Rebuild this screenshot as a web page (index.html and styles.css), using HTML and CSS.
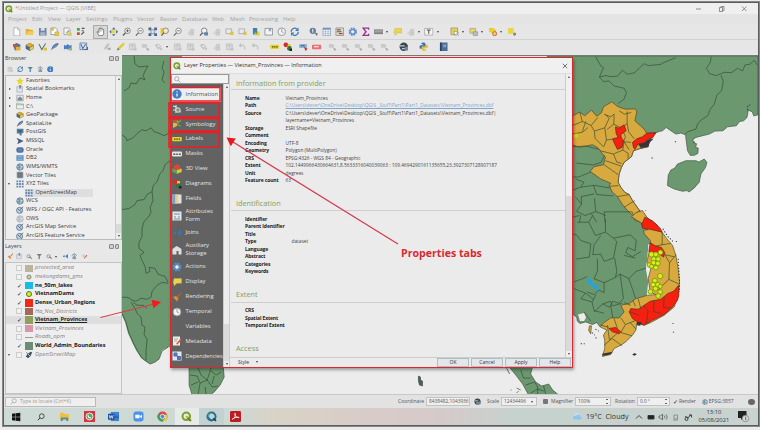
FILE: index.html
```html
<!DOCTYPE html>
<html lang="en">
<head>
<meta charset="utf-8">
<title>Untitled Project — QGIS</title>
<link rel="stylesheet" href="styles.css">
</head>
<body>
<svg class="defs" width="0" height="0">
  <defs>
    <symbol id="qgis" viewBox="0 0 10 10"><circle cx="4.8" cy="4.8" r="3.4" fill="none" stroke="#7aa32c" stroke-width="1.9"/><path d="M5 5l4 4" stroke="#5d8a20" stroke-width="1.9"/><path d="M4.6 4.6l1.6 1.6" stroke="#e2b63c" stroke-width="1.5"/></symbol>
    <symbol id="page" viewBox="0 0 10 10"><path d="M2 .8h4.2L8.200 3v6.300H2z" fill="#fff" stroke="#9a9a9a" stroke-width=".7"/><path d="M6 1v2.200h2" fill="none" stroke="#9a9a9a" stroke-width=".6"/></symbol>
    <symbol id="folder" viewBox="0 0 10 10"><path d="M.7 2h3l1 1h3.500v5.500H.7z" fill="#e6ad35"/><path d="M1 8.500l1.500-4h7L8.200 8.500z" fill="#f5ca55"/></symbol>
    <symbol id="save" viewBox="0 0 10 10"><path d="M1 1h8v8H1z" fill="#7184a4"/><path d="M3 1h4v3H3z" fill="#d6deeb"/><path d="M2.500 5.500h5V9h-5z" fill="#a9b6cc"/></symbol>
    <symbol id="layout" viewBox="0 0 10 10"><path d="M1 1h5l1.500 1.500V8H1z" fill="#fff" stroke="#8b8b8b" stroke-width=".8"/><path d="M1 1h3v3H1z" fill="#e8b83b"/><path d="M5.200 5.200h4v4h-4z" fill="#eec834" stroke="#a8922b" stroke-width=".4"/></symbol>
    <symbol id="tool" viewBox="0 0 10 10"><path d="M1 1h5l1.500 1.500V8H1z" fill="#f4f4f4" stroke="#8b8b8b" stroke-width=".7"/><path d="M3 6l3-3 1.200 1.200-3 3z" fill="#a5aa90"/><path d="M5.500 6h3.700v3.200H5.500z" fill="#ddca52"/></symbol>
    <symbol id="style" viewBox="0 0 10 10"><path d="M1 1h3v3H1z" fill="#48a458"/><path d="M1 5.500h3v3H1z" fill="#d14d3a"/><path d="M6 1.500h3M6 4h2M5.500 8l3-3" stroke="#555" stroke-width="1.200"/></symbol>
    <symbol id="hand" viewBox="0 0 10 10"><path d="M3 9L1 5.200l1-.4L3 6V2.200h1V1h1v.7h1V2h1v.7h1V7L7 9z" fill="#fff" stroke="#555" stroke-width=".7"/><path d="M4 2.500V5M5 2v3M6 2.500V5" stroke="#777" stroke-width=".4"/></symbol>
    <symbol id="pan" viewBox="0 0 10 10"><path d="M5 .3l2 2.200H3zM5 9.700L3 7.500h4zM.3 5l2.200-2v4zM9.700 5L7.500 7V3z" fill="#3979a8"/><path d="M3.300 3.300h3.400v3.400H3.300z" fill="#f1d232"/></symbol>
    <symbol id="zoomin" viewBox="0 0 10 10"><circle cx="5.800" cy="4" r="2.900" fill="#f6f6f6" stroke="#6b6b6b" stroke-width=".8"/><path d="M3.700 6.200L.9 9" stroke="#555" stroke-width="1.300"/><path d="M4.300 4h3M5.800 2.500v3" stroke="#444" stroke-width=".8"/></symbol>
    <symbol id="zoomout" viewBox="0 0 10 10"><circle cx="5.800" cy="4" r="2.900" fill="#f6f6f6" stroke="#777" stroke-width=".8"/><path d="M3.700 6.200L.9 9" stroke="#666" stroke-width="1.200"/><path d="M4.300 4h3" stroke="#555" stroke-width=".8"/></symbol>
    <symbol id="zoomfull" viewBox="0 0 10 10"><path d="M.5.500h3v3h-3zM6.500.500h3v3h-3zM.5 6.500h3v3h-3zM6.500 6.500h3v3h-3z" fill="#47688f"/><circle cx="5" cy="5" r="2.200" fill="#d7e1ed" stroke="#627b98" stroke-width=".8"/></symbol>
    <symbol id="zoomsel" viewBox="0 0 10 10"><path d="M.5 1h5v6h-5z" fill="#eccb38"/><circle cx="6" cy="4" r="2.900" fill="#eee9c4" stroke="#777" stroke-width=".8"/><path d="M4 6.200L1.500 9" stroke="#555" stroke-width="1.200"/></symbol>
    <symbol id="zoomblue" viewBox="0 0 10 10"><circle cx="5.500" cy="4" r="2.900" fill="#eef2f5" stroke="#667" stroke-width=".8"/><path d="M3.700 6.200L1 9" stroke="#555" stroke-width="1.200"/><path d="M5.500 5.500h4v3.500h-4z" fill="#5f87ac"/></symbol>
    <symbol id="ghost" viewBox="0 0 10 10"><path d="M1.500 7.500l3-4M5 2.500h3v3H5zM4 6h4v2.500H4z" fill="#d3d3d3" stroke="#bcbcbc" stroke-width=".7"/></symbol>
    <symbol id="ghost2" viewBox="0 0 10 10"><path d="M1.500 2h6v6h-6zM2 4h6M4.500 2v6" fill="#dedede" stroke="#bdbdbd" stroke-width=".8"/><path d="M6 6h3v3H6z" fill="#c4c4c4"/></symbol>
    <symbol id="ghost3" viewBox="0 0 10 10"><path d="M1.500 3l3 4 3-3M2 3h4" fill="none" stroke="#bbb" stroke-width="1.100"/><path d="M6 6h2.500v2.500H6z" fill="#c6c6c6"/></symbol>
    <symbol id="ghost4" viewBox="0 0 10 10"><path d="M1 2h4l2 2-1.500 2H1z" fill="#c9c9c9"/><path d="M5 5.500l4 2-2 2z" fill="#aaa"/></symbol>
    <symbol id="undo" viewBox="0 0 10 10"><path d="M3 1.500L1.500 4 4 5M2 4c3-2 6 0 5 4" fill="none" stroke="#bdbdbd" stroke-width="1.100"/></symbol>
    <symbol id="mapnew" viewBox="0 0 10 10"><path d="M1 2h6v5H1z" fill="#e9e9e9" stroke="#999" stroke-width=".7"/><path d="M5.500 5h3.500v3.500H5.500z" fill="#dfc241"/></symbol>
    <symbol id="db" viewBox="0 0 10 10"><path d="M2 1h4.500v7H2z" fill="#3b83ac"/><path d="M4 5h5v4H4z" fill="#e8cb3a"/><path d="M4 4.500h3L5.500 8z" fill="#4b9754"/></symbol>
    <symbol id="book" viewBox="0 0 10 10"><path d="M1 1.500h8v7H1z" fill="#f3f3f3" stroke="#88909a" stroke-width=".9"/><path d="M5 1h2.500v4L6.200 4 5 5z" fill="#929eac"/></symbol>
    <symbol id="clock" viewBox="0 0 10 10"><circle cx="5" cy="5" r="4" fill="#f3f3f3" stroke="#8d8d8d" stroke-width=".9"/><path d="M5 2v3l2 1" fill="none" stroke="#888" stroke-width=".8"/></symbol>
    <symbol id="refresh" viewBox="0 0 10 10"><path d="M1.300 5a3.700 3.700 0 0 1 6-3M8.700 5a3.700 3.700 0 0 1-6 3" fill="none" stroke="#3579ba" stroke-width="1.400"/><path d="M9 .5v3.700H5.300zM1 9.500V5.800h3.700z" fill="#3579ba"/></symbol>
    <symbol id="ident" viewBox="0 0 10 10"><circle cx="4" cy="4" r="3.300" fill="#607d9d"/><path d="M4 2v4" stroke="#fff"/><path d="M5.500 5l4 2-1.500 2.500z" fill="#777"/></symbol>
    <symbol id="table" viewBox="0 0 10 10"><path d="M1 1h8v8H1z" fill="#f3f6f9" stroke="#8b9cb2" stroke-width=".7"/><path d="M1 1h8v2H1z" fill="#6e96c8"/><path d="M1 5h8M1 7h8M3.700 1v8M6.400 1v8" stroke="#98a9be" stroke-width=".6"/></symbol>
    <symbol id="abacus" viewBox="0 0 10 10"><path d="M1 1h8v8H1z" fill="#dcdccf" stroke="#888" stroke-width=".8"/><path d="M2 3h4M4 7h4" stroke="#b34336" stroke-width="1.300"/><path d="M2 5h5" stroke="#427346" stroke-width="1.300"/></symbol>
    <symbol id="gear" viewBox="0 0 10 10"><circle cx="5" cy="5" r="3.300" fill="none" stroke="#5e8fc5" stroke-width="2.200" stroke-dasharray="1.800 .8"/><circle cx="5" cy="5" r="2.300" fill="#eef3f9" stroke="#5e8fc5" stroke-width="1.200"/></symbol>
    <symbol id="sigma" viewBox="0 0 10 10"><path d="M8 2.800V1.200H2.300L5.300 5 2.300 8.800H8V7.200" fill="none" stroke="#9b2f91" stroke-width="1.400"/></symbol>
    <symbol id="ruler" viewBox="0 0 10 10"><path d="M.3 3h9.400v4H.3z" fill="#aaa" stroke="#666" stroke-width=".7"/><path d="M2 5v2M4 5v2M6 5v2M8 5v2" stroke="#555" stroke-width=".6"/></symbol>
    <symbol id="bubble" viewBox="0 0 10 10"><path d="M2 1.500h7.500v4.800H5L2 9V6.300H1z" fill="#ecd34f" stroke="#c0ab4b" stroke-width=".4"/></symbol>
    <symbol id="text" viewBox="0 0 10 10"><path d="M.7 1.500h8.600v7H.7z" fill="#f4f4f4" stroke="#999" stroke-width=".7"/><path d="M3 3.200h4M5 3.200v4" stroke="#444" stroke-width="1"/></symbol>
    <symbol id="select" viewBox="0 0 10 10"><path d="M1 1h7v7H1z" fill="#e9d34b" stroke="#8f8962" stroke-width=".7"/><path d="M4 4l5 2-2 1 2 2-1 .7-2-2-1 1.300z" fill="#fff" stroke="#666" stroke-width=".5"/></symbol>
    <symbol id="select2" viewBox="0 0 10 10"><path d="M1 1.500h6v5H1z" fill="#ead65c" stroke="#999" stroke-width=".7"/><path d="M4.500 5h4.500v4H4.500z" fill="#b9bec4" stroke="#777" stroke-width=".5"/></symbol>
    <symbol id="select3" viewBox="0 0 10 10"><path d="M1 1h5l3 3-3 3-5-2z" fill="#e8cf30"/><circle cx="7" cy="7" r="2.200" fill="#e7cf52" stroke="#cb5848" stroke-width=".9"/></symbol>
    <symbol id="select4" viewBox="0 0 10 10"><path d="M1 1h6v6H1z" fill="#ecd63f"/><circle cx="8" cy="7.500" r="1.600" fill="#858585"/></symbol>
    <symbol id="dsm" viewBox="0 0 10 10"><path d="M1 3l4-2 4 2-1 5-5 1z" fill="#3d79aa"/><path d="M1 2h4v3H1z" fill="#d5522f"/><path d="M4 5h5v4H4z" fill="#e6b22f"/></symbol>
    <symbol id="gpkg" viewBox="0 0 10 10"><path d="M5 .8l4.300 2.400v4L5 9.500.7 7.200v-4z" fill="#3f6b8d"/><path d="M5 .8l4.300 2.400L5 5.500.7 3.200z" fill="#e4a828"/><path d="M5 6l4-2v3L5 9z" fill="#e8cf45"/></symbol>
    <symbol id="vec" viewBox="0 0 10 10"><path d="M1 2l3 6 4-6.500" fill="none" stroke="#657468" stroke-width="1.100"/><path d="M6 6h3.500v3H6z" fill="#dac03c"/></symbol>
    <symbol id="feather" viewBox="0 0 10 10"><path d="M1 9C2 4 5 1 9 1 9 4 6 6 2.500 7.500z" fill="#5672a3"/><path d="M1 9L7 3" stroke="#dfe6f0" stroke-width=".5"/></symbol>
    <symbol id="mesh" viewBox="0 0 10 10"><path d="M1 3l2 1 2-2 2 2 2-1v5l-2-1-2 1-2-1-2 1z" fill="#477fc2"/><path d="M6 6h3.500v3H6z" fill="#9cae86"/></symbol>
    <symbol id="virt" viewBox="0 0 10 10"><path d="M1 1h7v7H1z" fill="#dce4ee" stroke="#5778a5" stroke-width=".8"/><path d="M2 2l2 5 3-5M5 8h4V5" fill="none" stroke="#4d6da0" stroke-width="1.100"/></symbol>
    <symbol id="pencil" viewBox="0 0 10 10"><path d="M1 9l1-3L7.500.5l1.800 1.800L3.800 8z" fill="#d7cf35"/><path d="M1 9l1-3 1.800 2z" fill="#7c7951"/></symbol>
    <symbol id="pencilg" viewBox="0 0 10 10"><path d="M1 8l1-3L5.500 1 7 2.500 3.800 7z" fill="#c2c2c2"/><path d="M5 6h3v2.500H5z" fill="#aaa"/></symbol>
    <symbol id="labely" viewBox="0 0 10 10"><rect x=".2" y="3" width="9.600" height="4.300" rx="1" fill="#ead326"/><path d="M2 5.200h1.600M4.300 5.200h1.500M6.600 5.200h1.500" stroke="#554c16" stroke-width="1.300"/></symbol>
    <symbol id="diag" viewBox="0 0 10 10"><circle cx="3" cy="3" r="2.500" fill="#d42e25"/><path d="M5 2h3v4H5z" fill="#e9c82b"/><circle cx="6.800" cy="6.800" r="2.500" fill="#2d763c"/><path d="M7 7h2.500v2.500H7z" fill="#222"/></symbol>
    <symbol id="labelb" viewBox="0 0 10 10"><rect y="2" width="8.500" height="4.200" rx="1" fill="#8ab4d8"/><path d="M5 5l4 2-2 2.500z" fill="#c7302e"/><path d="M2 4h4" stroke="#3b5368"/></symbol>
    <symbol id="labelr" viewBox="0 0 10 10"><rect y="3" width="9.800" height="4.500" rx="1" fill="#ec6d72"/><path d="M2 5h5" stroke="#fff" stroke-width="1.100"/></symbol>
    <symbol id="globe" viewBox="0 0 10 10"><circle cx="5" cy="5" r="4.400" fill="#394650"/><path d="M1 4h5M3 7h5" stroke="#bdcbd4" stroke-width="1.300"/><path d="M6 5h3.500v4H6z" fill="#6e879a"/></symbol>
    <symbol id="python" viewBox="0 0 10 10"><path d="M2 1.500C4 0 7 .5 7 2.500V5H3v2H1C0 5 .5 3.500 2 3.500h3z" fill="#3d75a6"/><path d="M8 8.500C6 10 3 9.500 3 7.500V5h4V3h2c1 2 .5 3.500-1 3.500H5z" fill="#e8c141"/></symbol>
    <symbol id="help" viewBox="0 0 10 10"><path d="M1 .5h8v9H1z" fill="#4b6f97"/><path d="M1 .5h1.700v9H1z" fill="#25405f"/><path d="M4.500 2.500h3v3h-3z" fill="#86a2c0"/></symbol>
    <symbol id="star" viewBox="0 0 10 10"><path d="M5 .3l1.400 3.200 3.500.3-2.700 2.300.9 3.500L5 7.700 1.900 9.600l.9-3.500L.1 3.800l3.500-.3z" fill="#ead829"/></symbol>
    <symbol id="mark" viewBox="0 0 10 10"><path d="M1 2h7v7H1z" fill="#dfe3e8" stroke="#9ca8b4" stroke-width=".8"/><path d="M4 0h2.500v5L5.200 4 4 5z" fill="#7a90aa"/></symbol>
    <symbol id="home" viewBox="0 0 10 10"><path d="M1 1.500h8v7H1z" fill="#e5e7ea" stroke="#8c949c" stroke-width=".8"/><path d="M5 3l3 2.500V8H2V5.500z" fill="#7e8c9c"/></symbol>
    <symbol id="drive" viewBox="0 0 10 10"><path d="M.7 1.500h4l1 1H9.300v6H.7z" fill="#eef1ee" stroke="#8ba092" stroke-width=".8"/><path d="M.7 3.500h8.600" stroke="#8ba092" stroke-width="1"/></symbol>
    <symbol id="pg" viewBox="0 0 10 10"><path d="M1 1h8.300v5L7 7v2.500H5L4 7H1z" fill="#507d9c"/><path d="M3 3h4v2H3z" fill="#365c79"/></symbol>
    <symbol id="ms" viewBox="0 0 10 10"><path d="M.5 1l9 4-8 4 1.500-4z" fill="#415c86"/></symbol>
    <symbol id="ora" viewBox="0 0 10 10"><rect x=".5" y="1.500" width="9" height="7" rx="2.500" fill="#4f6ea5"/><path d="M2.500 4h5M2.500 6h5" stroke="#8aa2ca" stroke-width=".6"/></symbol>
    <symbol id="db2" viewBox="0 0 10 10"><path d="M.5 1.500h9v7h-9z" fill="#5e93c4"/><path d="M2 3.500h6M2 6.500h6" stroke="#a9cbe6" stroke-width="1"/></symbol>
    <symbol id="wms" viewBox="0 0 10 10"><circle cx="5" cy="5" r="4" fill="#cfdbe2" stroke="#50748d" stroke-width="1"/><path d="M2 3l3 1 3-2M1 6h5l3 1M4 1v8" fill="none" stroke="#50748d" stroke-width=".9"/></symbol>
    <symbol id="vt" viewBox="0 0 10 10"><path d="M1 1h8v8H1z" fill="#9298a0"/><path d="M3.700 1v8M6.300 1v8M1 3.700h8M1 6.300h8" stroke="#555c65" stroke-width=".8"/></symbol>
    <symbol id="xyz" viewBox="0 0 10 10"><path d="M.5.500h2.300v2.300H.5zM3.800.500h2.300v2.300H3.800zM7.200.500h2.300v2.300H7.200zM.5 3.800h2.300v2.300H.5zM3.800 3.800h2.300v2.300H3.800zM7.200 3.800h2.300v2.300H7.200zM.5 7.200h2.300v2.300H.5zM3.800 7.200h2.300v2.300H3.800zM7.200 7.200h2.300v2.300H7.200z" fill="#6388b4"/></symbol>
    <symbol id="arc" viewBox="0 0 10 10"><circle cx="4.500" cy="5.500" r="3.800" fill="#c3d0dc" stroke="#4f6e91" stroke-width="1"/><path d="M5 4.500l4-3.500M2.500 4l4.500 3.500" stroke="#476789" stroke-width="1.100"/></symbol>
    <symbol id="info" viewBox="0 0 10 10"><circle cx="5" cy="5" r="4.700" fill="#3f7fc1"/><path d="M5 4.500v3M5 2.300v1" stroke="#fff" stroke-width="1.200"/></symbol>
    <symbol id="filter" viewBox="0 0 10 10"><path d="M1 1.500h8L6 5v4.500H4V5z" fill="#4b87b5"/></symbol>
    <symbol id="up" viewBox="0 0 10 10"><path d="M1 4l4-3 4 3M5 2v7M3 6h4v3H3z" fill="none" stroke="#6d7f93" stroke-width="1.200"/></symbol>
    <symbol id="source" viewBox="0 0 10 10"><path d="M1 2l3 1 1 4 4 1M1 6h6M4 1v8" fill="none" stroke="#ddd" stroke-width="1.200"/><circle cx="6" cy="6" r="2.300" fill="#8a9487" stroke="#f0f0e2" stroke-width=".8"/></symbol>
    <symbol id="symb" viewBox="0 0 10 10"><path d="M1 1l6 1-2 5-4 2z" fill="#e4b640"/><path d="M1 1h4v3H1z" fill="#d44f33"/><path d="M5 5l4-4M5 6l4 1" stroke="#5c9c52" stroke-width="1.800"/></symbol>
    <symbol id="mask" viewBox="0 0 10 10"><rect y="2.500" width="10" height="5" rx="1.300" fill="#e4e6e8"/><path d="M1.300 5.200h2M4.200 5.200h1.600M6.800 5.200h2" stroke="#555" stroke-width="1.400"/></symbol>
    <symbol id="cube" viewBox="0 0 10 10"><path d="M5 .3l3 1.500v3L5 6 2 4.800v-3z" fill="#e0443f"/><path d="M.3 4.500L5 6v3.700L.3 8z" fill="#57a84d"/><path d="M9.700 4.500L5 6v3.700L9.700 8z" fill="#e4c42d"/></symbol>
    <symbol id="fields" viewBox="0 0 10 10"><path d="M.5.500h9v9h-9z" fill="#dfe2dc"/><path d="M.5.500h3v9h-3z" fill="#7c9fcb"/><path d="M3.500.500H6v9H3.500z" fill="#e4d37d"/></symbol>
    <symbol id="form" viewBox="0 0 10 10"><path d="M.5.500h9v9h-9z" fill="#e4e8ea"/><path d="M2 3h6M2 6h2M6 6h2M2 8h6" stroke="#798d9c" stroke-width="1"/></symbol>
    <symbol id="join" viewBox="0 0 10 10"><path d="M1 5l3-2v4zM5 5l4-3.500v7z" fill="#3974b7"/></symbol>
    <symbol id="aux" viewBox="0 0 10 10"><path d="M.5 4l4-3 2 1 3 2v5.500h-3V6h-2v3.500h-4z" fill="#dfdfdf"/></symbol>
    <symbol id="brush" viewBox="0 0 10 10"><path d="M5 4.500L9 .5l.6.700L6 5.500z" fill="#c55e2b"/><path d="M1 5l3-1 2.500 2.500L5 9.500z" fill="#e38b38"/></symbol>
    <symbol id="note" viewBox="0 0 10 10"><path d="M1 .5h7v9H1z" fill="#eeece8"/><path d="M2 3h4M2 5h3" stroke="#999" stroke-width=".8"/><path d="M4 8l4.500-5.500L9.700 3.700 5.500 8.500z" fill="#d75b37"/></symbol>
    <symbol id="dep" viewBox="0 0 10 10"><path d="M.5.500h9v9h-9z" fill="#e2e7ee"/><path d="M2 2h3v3H2zM5.500 5.500h3v3h-3zM4 4l3 3" fill="#5a81bb" stroke="#456ca8" stroke-width="1"/></symbol>
    <symbol id="mag" viewBox="0 0 10 10"><circle cx="6" cy="4" r="3" fill="none" stroke="currentColor" stroke-width=".9"/><path d="M3.800 6.200L1 9" stroke="currentColor" stroke-width="1.100"/></symbol>
    <symbol id="eye" viewBox="0 0 10 10"><circle cx="4" cy="5" r="2.500" fill="none" stroke="#888" stroke-width="1.200"/><path d="M5 6l4 2.500" stroke="#666" stroke-width="1.500"/></symbol>
    <symbol id="dot3" viewBox="0 0 10 10"><circle cx="5" cy="5" r="2.600" fill="#c3c9a6" stroke="#777" stroke-width="1"/></symbol>
    <symbol id="osm" viewBox="0 0 10 10"><path d="M1 1l3 2 3-2 2 1-2 4-3 3-3-2 2-3z" fill="#41505c"/><path d="M3 3l4 4" stroke="#b5c6d2" stroke-width="1.200"/></symbol>
  </defs>
</svg>

<div class="window">
  <header class="titlebar">
    <svg class="i8"><use href="#qgis"/></svg><span class="apptitle">*Untitled Project — QGIS [VIBE]</span>
    <span class="winbtns"><svg width="54" height="8" viewBox="0 0 54 8" fill="none" stroke="#777" stroke-width=".8"><path d="M1 4h5"/><path d="M24.500 2.500h3v4h-3zM26 2.500v-1h3v4h-1.500"/><path d="M47 1.500l4.500 4.500M51.500 1.500L47 6"/></svg></span>
  </header>
  <nav class="menubar"><span>Project</span><span>Edit</span><span>View</span><span>Layer</span><span>Settings</span><span>Plugins</span><span>Vector</span><span>Raster</span><span>Database</span><span>Web</span><span>Mesh</span><span>Processing</span><span>Help</span></nav>
  <div class="toolbar">
    <i><svg><use href="#page"/></svg></i><i><svg><use href="#folder"/></svg></i><i><svg><use href="#save"/></svg></i><i><svg><use href="#layout"/></svg></i><i><svg><use href="#tool"/></svg></i><i><svg><use href="#style"/></svg></i>
    <i class="g7 pressed"><svg><use href="#hand"/></svg></i><i><svg><use href="#pan"/></svg></i><i><svg><use href="#zoomin"/></svg></i><i><svg><use href="#zoomout"/></svg></i><i><svg><use href="#zoomfull"/></svg></i><i><svg><use href="#zoomsel"/></svg></i><i><svg><use href="#zoomout"/></svg></i><i><svg><use href="#ghost"/></svg></i><i><svg><use href="#zoomblue"/></svg></i><i><svg><use href="#ghost"/></svg></i><i><svg><use href="#mapnew"/></svg></i><i><svg><use href="#mapnew"/></svg></i><i><svg><use href="#db"/></svg></i><i><svg><use href="#book"/></svg></i><i><svg><use href="#clock"/></svg></i><i><svg><use href="#refresh"/></svg></i>
    <i class="g7"><svg><use href="#ident"/></svg></i><i><svg><use href="#table"/></svg></i><i><svg><use href="#abacus"/></svg></i><i><svg><use href="#gear"/></svg></i><i><svg><use href="#sigma"/></svg></i><i><svg><use href="#ruler"/></svg></i><b></b><i><svg><use href="#bubble"/></svg></i><i><svg><use href="#ghost"/></svg></i><b></b><i><svg><use href="#text"/></svg></i><b></b>
    <i class="g7"><svg><use href="#select"/></svg></i><b></b><i><svg><use href="#select2"/></svg></i><b></b><i><svg><use href="#select3"/></svg></i><b></b><i><svg><use href="#select4"/></svg></i>
  </div>
  <div class="toolbar second">
    <i><svg><use href="#dsm"/></svg></i><i><svg><use href="#gpkg"/></svg></i><i><svg><use href="#vec"/></svg></i><i><svg><use href="#feather"/></svg></i><i><svg><use href="#mesh"/></svg></i>
    <i class="g3"><svg><use href="#virt"/></svg></i>
    <i class="g10"><svg><use href="#pencilg"/></svg></i><i><svg><use href="#pencil"/></svg></i><i><svg><use href="#ghost2"/></svg></i><i><svg><use href="#ghost4"/></svg></i><i><svg><use href="#ghost3"/></svg></i><b></b><i><svg><use href="#ghost2"/></svg></i><i><svg><use href="#ghost2"/></svg></i><i><svg><use href="#ghost3"/></svg></i><i><svg><use href="#ghost"/></svg></i><i><svg><use href="#ghost2"/></svg></i><i><svg><use href="#undo"/></svg></i><i><svg><use href="#undo"/></svg></i>
    <i class="g7"><svg><use href="#labely"/></svg></i><i><svg><use href="#diag"/></svg></i><i class="g3"><svg><use href="#labelb"/></svg></i><i><svg><use href="#labelr"/></svg></i>
    <i class="g3"><svg><use href="#ghost4"/></svg></i><i><svg><use href="#ghost4"/></svg></i><i><svg><use href="#ghost4"/></svg></i><i><svg><use href="#ghost4"/></svg></i><i><svg><use href="#ghost4"/></svg></i>
    <i class="g7"><svg><use href="#globe"/></svg></i><i class="g7"><svg><use href="#python"/></svg></i><i class="g7"><svg><use href="#help"/></svg></i>
  </div>

  <main class="work">
    <aside class="docks">
      <div class="dockhead"><span>Browser</span><em></em><em></em></div>
      <div class="docktools"><i><svg><use href="#ghost2"/></svg></i><i><svg><use href="#refresh"/></svg></i><i><svg><use href="#filter"/></svg></i><i><svg><use href="#up"/></svg></i><i><svg><use href="#info"/></svg></i></div>
      <div class="browser">
        <ul class="tree">
          <li><u></u><svg><use href="#star"/></svg>Favorites</li>
          <li><u class="c"></u><svg><use href="#mark"/></svg>Spatial Bookmarks</li>
          <li><u class="c"></u><svg><use href="#home"/></svg>Home</li>
          <li><u class="c"></u><svg><use href="#drive"/></svg>C:\</li>
          <li><u></u><svg><use href="#gpkg"/></svg>GeoPackage</li>
          <li><u></u><svg><use href="#feather"/></svg>SpatiaLite</li>
          <li><u></u><svg><use href="#pg"/></svg>PostGIS</li>
          <li><u></u><svg><use href="#ms"/></svg>MSSQL</li>
          <li><u></u><svg><use href="#ora"/></svg>Oracle</li>
          <li><u></u><svg><use href="#db2"/></svg>DB2</li>
          <li><u></u><svg><use href="#wms"/></svg>WMS/WMTS</li>
          <li><u></u><svg><use href="#vt"/></svg>Vector Tiles</li>
          <li><u class="o"></u><svg><use href="#xyz"/></svg>XYZ Tiles</li>
          <li class="child"><span><svg><use href="#xyz"/></svg>OpenStreetMap</span></li>
          <li><u></u><svg><use href="#wms"/></svg>WCS</li>
          <li><u></u><svg><use href="#arc"/></svg>WFS / OGC API - Features</li>
          <li><u></u><svg class="pale"><use href="#wms"/></svg>OWS</li>
          <li><u></u><svg><use href="#arc"/></svg>ArcGIS Map Service</li>
          <li><u></u><svg><use href="#arc"/></svg>ArcGIS Feature Service</li>
        </ul>
        <div class="scroll"><s class="up"></s><span class="low"></span><s class="dn"></s></div>
      </div>
      <div class="dockhead lay"><span>Layers</span><em></em><em></em></div>
      <div class="docktools ltools"><i><svg><use href="#brush"/></svg></i><i><svg><use href="#mark"/></svg></i><i><svg><use href="#eye"/></svg></i><i><svg class="grey"><use href="#filter"/></svg></i><i><svg><use href="#eye"/></svg></i><b></b><i><svg><use href="#join"/></svg></i><i><svg><use href="#up"/></svg></i><i><svg><use href="#note"/></svg></i></div>
      <ul class="layers">
        <li class="off"><u></u><q></q><i class="sw tan"></i>protected_area</li>
        <li class="off"><u></u><q></q><i class="sw"><svg><use href="#dot3"/></svg></i>mekongdams_gms</li>
        <li><u></u><q class="k">✓</q><i class="sw cyan"></i>ne_50m_lakes</li>
        <li><u></u><q class="k">✓</q><i class="sw dam"></i>VietnamDams</li>
        <li><u></u><q class="k">✓</q><i class="sw red"></i>Dense_Urban_Regions</li>
        <li class="off"><u></u><q></q><i class="sw brown"></i>Ha_Noi_Districts</li>
        <li class="sel"><u></u><q class="k">✓</q><i class="sw olive"></i><ins>Vietnam_Provinces</ins></li>
        <li class="off"><u></u><q></q><i class="sw pink"></i>Vietnam_Provinces</li>
        <li class="off"><u></u><q></q><i class="sw line"></i>Roads_opm</li>
        <li><u></u><q class="k">✓</q><i class="sw green"></i>World_Admin_Boundaries</li>
        <li class="off"><u class="o"></u><q></q><i class="sw"><svg><use href="#osm"/></svg></i>OpenStreetMap</li>
      </ul>
    </aside>

    <svg class="map" viewBox="122 55 635 340" preserveAspectRatio="none">
      <path class="land nb" d="M122 55h60v292l-14 0-6 3-3 9-4 3-5 2-5-3-4-3-5-8-3-6-5-11-3-11-4-9z"/>
      <path class="bd" d="M122 313l4 9 3 11 5 11 3 6 5 8 4 3 4 3 5-2 4-3 3-8 6-4"/>
      <path class="bd" d="M134 55l1 8 4 3 9-1-3 5-2 5 2 4-5-2-4 6-5-1-2 5-5 3M164 60l-2 7 2 4-2 8 3 3M122 134l4 3 1 3 6-3 5-5 4-3 4 1 5-3 3 4 4 1 6 3 6-3M170 160l-5 4-2 6-3 3-3 8-4 4-1 6-5 3-3 5-7 1-2 4-6 4-7 1M152 191l1 9-3 7 1 5-3 5-4 4-2 7 0 8-3 6 0 6 5 4-4 3 2 5 3 6 1 7 4-2-1-4 6 1 3 6 7 2 3 6M168 283l-6-1-5 3-5 6-1 6-4 2-6-1-5 3-4-1-4-3-6 0M131 302l4 6 2 5 4 4 1 8 3 2-1 7 3 5-1 12 0 9M133 302l4 3 6 0 4 3"/>
      <path class="land nb" d="M560 55h14v65h-14z"/>
      <path class="land" d="M189 366h34l1 11-4 8-6 7-4 3h-18l-3-10z"/>
      <path class="bd" d="M190 375l7 1 3 7 7-3 4-12M200 383l-2 11M207 380l5 7 6-1M211 371l5 4 5-3M191 385l7-3M205 387l1 8M198 368l3 7 6 5M214 376l-2 8"/>
      <path class="land dkl" d="M418 376l2 1 0 3 2 1 0 5-3-1-1-4z"/>
      <path class="land" d="M508 366H532L530 374 535 382 541 386 548 384 552 390 558 395H528L522 384 516 376z"/>
      <path class="bd" d="M520 370l3 8 7 0M525 385l9-3M534 382l3 5 0 7M530 393l7-4 6 2M543 386l2 8M516 388l4 2M518 391l-2 2M510 390h1M506 368l3 6"/>
      <g transform="translate(560 50) scale(.33333)">
        <path class="land" d="M-40 15H591V192L584 194 578 195 574 183 562 178 558 200 548 210 536 212 526 225 500 228 486 240 462 241 445 250 425 255 405 260 396 266 398 276 407 279 404 290 412 292 411 308 400 314 388 314 380 300 376 270 374 252 360 247 345 250 330 240 316 230 305 240 296 242 285 246 262 270 262 288 236 294 218 300 212 318 190 335 182 350 175 370 172 395 180 410 192 425 205 432 215 450 235 478 255 500 270 510 290 525V580H-40z"/>
        <path class="land" d="M322 374L330 358 342 352 350 340 375 330 405 330 414 334 430 325 438 335 434 350 420 370 415 395 400 412 385 424 378 420 365 422 340 415 320 405z"/>
        <path class="bd" d="M105 17L120 45 128 50 116 78 135 74 150 77 170 76 185 58 200 70 220 66 235 52 250 38 262 44 280 42 300 40 310 34 330 26 345 20M116 78L128 92 145 90 160 105 190 112 197 125 190 145 172 158M451 17L448 35 436 52 446 68 466 74 490 64 512 65 530 52 545 60 552 42 566 40 580 28 588 42M480 73L487 90 482 120 468 132 460 160 448 175 440 195 420 208 410 220 405 235 380 243 372 252"/>
        <path class="vn" d="M36 195L57 184 72 195 92 178 108 196 122 186 128 168 153 153 168 165 178 170 195 175 224 174 228 183 222 210 250 235 258 248 285 246 262 270 262 288 236 294 218 300 212 318 190 335 182 350 175 370 172 395 180 410 192 425 205 432 215 450 235 478 255 500 270 510 290 525L250 528 240 515 222 510 216 495 200 480 185 462 170 438 155 425 145 405 150 398 120 385 88 362 100 348 128 342 134 320 118 300 110 290 95 282 75 286 55 290 36 282z"/>
        <path class="bd" d="M57 184l8 28-29 12M65 212l26 12 20-24M91 224l10 17 31-10 13-28-11-12M36 250l30-6 16-14M101 241l2 22 25 25M132 231l5 37-8 20M160 190l-1 30 23 12 17-14 0-36M199 218l5 26 16 20M159 220l-20 16M137 268l20-3M182 232l12 25-9 25M118 300l40 10 28-12 4-25 20 2M158 310l10 24 14 4M186 298l16 10 0 16M190 273l15 24M134 330l46 16M130 342l42 30M145 407l28-2M170 438l36-6M190 470l32-20M216 495l22-16M175 180l16 10 20-5M130 190l20 8 10-8M75 212l-10 30"/>
        <path class="urb" d="M164 228L174 232 190 222 196 240 180 252 182 262 188 268 184 290 170 296 158 272 156 264 172 260 166 248zM215 275L218 290 222 296 232 280 250 276 262 264 275 262 285 246 258 247 245 258 228 264zM240 515L255 505 272 512 290 528H246z"/>
        <path class="dark" d="M232 280L240 292 262 288 268 274 278 264 262 266 250 276z"/>
        <path class="bd" d="M36 288l37-2 43 10M131 315l-10 20-24 8-50-6M90 364l-36 15-18 0M45 385l25 10-10 14-24 10M60 410l40-6 47 8M98 404l10 28 50 4M100 430l-38 8 0 24-15 20 26 13 32-12-4-40M130 484l84 0 4 10M130 484l4 41M105 483l30 12M45 440l17 20M60 494l-5 31M92 490l22 35M36 500l20-5"/>
        <path class="dash" d="M342 273h4M272 322h5M398 275l8-3M560 178l0-14 8-2M254 480h2"/>
        <circle cx="46" cy="255" r="7" fill="#c8d81c"/>
      </g>
      <g transform="translate(560 215) scale(.33333)">
        <path class="land nb" d="M-40 20H230L262 60 262 100 255 160 262 200 258 240 235 255 200 270 196 300 175 310 150 310 130 325 118 335 108 322 95 328 75 320 58 325 50 318 48 305 40 300H-40z"/>
        <path class="bd" d="M40 300L48 305 50 318 58 325 75 320 95 328 108 322 118 335"/>
        <path class="bd" d="M50 20l34 0 20 40 30-10 0-40M84 20l12-20M134 50l24 18 50-10 18 16-3 32-22-10-6 16 20 12 25-16M158 68l10 10-10 50-28 10-10-22-24 2 4-30 20-28M60 75l-12-16-12-4M60 75l30 10-4 40-40 6M110 130l0 38-10 22 30 12 34-16 4-18-6-40M164 186l14-10 26 14 22-22 30-10M204 190l14 40 6 20M130 202l0 30-16-8-14 14-20-8M178 176l10 74-14 14-18-6-10 18-20-10M40 200l40-16M40 220l36 14 24 20M60 250l14-16M60 250l34 10 6 26 30 8M94 260l12-22M126 266l24-8 4 14 30-8M126 266l-26 24M70 290l20 28M190 120l34 8M150 272l6 36"/>
        <path class="lake" d="M78 186l12 6 8 14 12 4 6 14-10-1-12-12-12-8z"/>
        <path class="vn" d="M212 4L225 -8 245 -15 262 10 300 45 318 70 335 90 345 120 352 160 356 200 352 240 340 275 310 300 270 322 250 330 228 325 225 345 215 360 195 380 180 390 160 400 150 418 125 424 132 400 132 375 128 360 138 345 118 335 130 322 150 308 175 308 190 290 180 270 205 265 225 250 260 240 285 238 268 230 262 190 270 160 258 140 265 110 272 90 268 75 250 55 248 45 262 42 245 25 238 20z"/>
        <path class="urb" d="M252 5L275 16 298 38 304 50 270 42 245 38 243 26zM268 82L285 92 302 96 312 112 308 125 290 112 264 108zM353 210L354 240 350 255 335 275 310 298 275 315 250 330 230 320 215 310 205 290 210 280 232 282 250 270 268 258 300 252 320 235 338 228zM144 340L165 337 180 350 175 356 155 350z"/>
        <path class="bd" d="M304 50l0 38-20 4M330 84l-28 4M312 118l28 6M312 118l14 24-2 50 30 14M324 192l-30 30 10 12M326 142l20-24M248 270l14 18-6 36M280 255l-2 34 24 6M310 245l-2 32 24 2M232 250l8 30M208 290l26 10M216 255l8 18M190 262l20 8M180 308l14 20 30-12M160 310l10 30M194 328l-14 24 34 10M140 330l6 44 24-20M130 390l24-20 30 22M120 330l24 6M226 342l-18-20"/>
        <path class="dark" d="M228 320l14 0-4 12-10-2zM214 418l8-4 6 4-8 4zM124 416l32-6-8 8-22 4z"/>
        <path class="sea" d="M52 298l18-5 6 14-6 10-12 0z"/>
        <path class="vn" d="M86 332l6 0-2 24-6-10z"/>
        <path class="dash" d="M306 40l14 22 16 16M352 130l4 70 0 30M60 386h12M335 325h3M336 350l5 2M106 366v4M345 78h3M94 352l8 8M104 342l10 6"/>
        <g class="dams"><circle cx="272" cy="117" r="8"/><circle cx="285" cy="117" r="7"/><circle cx="299" cy="111" r="7"/><circle cx="279" cy="131" r="7"/><circle cx="292" cy="131" r="7"/><circle cx="266" cy="149" r="7"/><circle cx="278" cy="142" r="7"/><circle cx="291" cy="144" r="7"/><circle cx="272" cy="153" r="6"/><circle cx="285" cy="157" r="7"/><circle cx="298" cy="182" r="8"/><circle cx="282" cy="196" r="7"/><circle cx="277" cy="208" r="7"/><circle cx="291" cy="208" r="7"/><circle cx="298" cy="213" r="6"/><circle cx="284" cy="220" r="7"/><circle cx="269" cy="229" r="7"/><circle cx="298" cy="230" r="7"/><circle cx="292" cy="242" r="7"/></g>
      </g>
    </svg>
  </main>

  <footer class="status">
    <div class="locator"><svg><use href="#mag"/></svg>Type to locate (Ctrl+K)</div>
    <label>Coordinate</label><span class="fld co">8438482,1043936</span><svg class="i8 crs"><use href="#globe"/></svg>
    <label>Scale</label><span class="fld sc">12434496<b></b></span><span class="lock"></span>
    <label>Magnifier</label><span class="fld mg">100%<span class="spin"></span></span>
    <label>Rotation</label><span class="fld ro">0.0 °<span class="spin"></span></span>
    <q class="k">✓</q><label>Render</label><svg class="i8 epsg"><use href="#wms"/></svg><label>EPSG:3857</label><span class="msg"></span>
  </footer>
  <footer class="taskbar">
    <i><svg viewBox="0 0 10 10"><path d="M1 1.800l3.600-.5v3.400H1zM5 1.200L9.300.7v4H5zM1 5.200h3.600v3.500L1 8.200zM5 5.200h4.300v4L5 8.700z" fill="#111"/></svg></i>
    <i><svg class="dk"><use href="#mag"/></svg></i>
    <i><svg viewBox="0 0 12 12" class="big"><path d="M1 2h4l1 1.200h5V10H1z" fill="#f1bf42"/><path d="M2 7h8v4H8V9H4v2H2z" fill="#3e8fd2"/></svg></i>
    <i><svg viewBox="0 0 12 12" class="big"><path d="M0 0h12v12H0z" fill="#d6353e"/><circle cx="6" cy="6" r="3.800" fill="#56a96a" stroke="#f2f2f2" stroke-width="1"/><path d="M4.500 4.500c0 2 1.500 3 3 3" fill="none" stroke="#fff" stroke-width="1.200"/></svg></i>
    <i><svg viewBox="0 0 12 12" class="big"><path d="M3 1h9v10H3z" fill="#3c84d4"/><path d="M3 5h9v3H3z" fill="#2768b8"/><path d="M0 3h7v6.500H0z" fill="#1d4f9e"/><path d="M1.300 4.500l1 3.500 1.200-3 1.200 3 1-3.500" fill="none" stroke="#fff" stroke-width=".8"/></svg></i>
    <i><svg viewBox="0 0 12 12" class="big"><rect x=".5" y=".5" width="11" height="11" rx="3" fill="#4b94ea"/><path d="M2.500 4h4.700v4H2.500zM7.700 5.500L9.700 4v4l-2-1.500z" fill="#fff"/></svg></i>
    <i><svg viewBox="0 0 12 12" class="big"><circle cx="6" cy="6" r="5.500" fill="#e4463a"/><path d="M6 6L1.200 3.300A5.500 5.500 0 0 0 6 11.500l2.500-4z" fill="#3ba257"/><path d="M6 11.500A5.500 5.500 0 0 0 11 4H6l2.500 3.500z" fill="#f4ca37"/><circle cx="6" cy="6" r="2.400" fill="#4a86e0" stroke="#fff" stroke-width=".8"/></svg></i>
    <i class="act"><svg class="big"><use href="#qgis"/></svg></i>
    <i class="run"><svg viewBox="0 0 12 12" class="big"><circle cx="6" cy="6" r="5.500" fill="#2d6d8c"/><path d="M2 4l3-2 3 1-1 2-3 2-2-1z" fill="#68a78d"/><circle cx="6.500" cy="6" r="2.500" fill="#a9d8e5" stroke="#eef" stroke-width=".7"/><path d="M8 8l3 3" stroke="#234" stroke-width="1.500"/></svg></i>
    <i><svg viewBox="0 0 12 12" class="big"><rect width="12" height="12" rx="1.500" fill="#bd1d20"/><path d="M2.500 9c3-1 4-4.500 3-6.500-1 2 2 5.500 4.500 4.500-2-.8-5 0-7.500 2z" fill="none" stroke="#fff" stroke-width=".9"/></svg></i>
    <span class="weather"><svg width="10" height="9" viewBox="0 0 10 9"><circle cx="4" cy="3.500" r="2.500" fill="#cfdff2"/><path d="M2 7.500a2 2 0 1 1 1-3.700 2.300 2.300 0 0 1 4.300.6A1.600 1.600 0 0 1 7.500 7.500z" fill="#8cc5ee"/></svg>19°C&nbsp; Cloudy</span>
    <svg class="tray" width="60" height="10" viewBox="0 0 60 10" fill="none" stroke="#333" stroke-width=".9"><path d="M1 6.500l3-3 3 3"/><path d="M13 3.500h6v3.500h-6z" fill="#222"/><path d="M24 4h1.500l2-2v6l-2-2H24zM29 3.500c1 1 1 2 0 3M31 2.500c1.500 2 1.500 3 0 5" stroke="#666"/><path d="M39 3h3.500v4H39zM38 8h5" stroke="#888"/><circle cx="51.500" cy="7" r="1.500"/><path d="M53 6l3-3.500M54 3h2.500v2.500M50 4.500l3 1"/></svg>
    <time><span>13:10</span><span>05/08/2021</span></time>
    <svg class="notif" width="14" height="13" viewBox="0 0 14 13"><path d="M1 1h8.500v7H6L4 10V8H1z" fill="#222"/><circle cx="8.500" cy="8.500" r="3.200" fill="#d8dcda" stroke="#777" stroke-width=".7"/><path d="M8.700 6.700v3.500" stroke="#444" stroke-width=".8"/></svg>
  </footer>
</div>

<section class="dialog">
  <header><svg class="i8"><use href="#qgis"/></svg><span>Layer Properties — Vietnam_Provinces — Information</span><svg class="x" width="6" height="6" viewBox="0 0 6 6"><path d="M.8.800l4.400 4.400M5.200.800L.8 5.200" stroke="#555" stroke-width=".8"/></svg></header>
  <div class="dbody">
    <div class="side">
      <div class="find"><svg><use href="#mag"/></svg></div>
      <div class="sidemid">
        <ul class="tabs">
          <li class="on"><svg><use href="#info"/></svg>Information</li>
          <li><svg><use href="#source"/></svg>Source</li>
          <li><svg><use href="#symb"/></svg>Symbology</li>
          <li><svg><use href="#labely"/></svg>Labels</li>
          <li><svg><use href="#mask"/></svg>Masks</li>
          <li><svg><use href="#cube"/></svg>3D View</li>
          <li><svg><use href="#diag"/></svg>Diagrams</li>
          <li><svg><use href="#fields"/></svg>Fields</li>
          <li class="two"><svg><use href="#form"/></svg>Attributes<br>Form</li>
          <li><svg><use href="#join"/></svg>Joins</li>
          <li class="two"><svg><use href="#aux"/></svg>Auxiliary<br>Storage</li>
          <li><svg><use href="#gear"/></svg>Actions</li>
          <li><svg><use href="#bubble"/></svg>Display</li>
          <li><svg><use href="#brush"/></svg>Rendering</li>
          <li><svg><use href="#clock"/></svg>Temporal</li>
          <li><svg></svg>Variables</li>
          <li><svg><use href="#note"/></svg>Metadata</li>
          <li><svg><use href="#dep"/></svg><span class="dep">Dependencies</span></li>
        </ul>
        <div class="scroll side-s"><s class="up"></s><span class="low"></span><s class="dn"></s></div>
      </div>
    </div>
    <div class="right">
      <div class="content">
        <div class="doc">
          <h2>Information from provider</h2>
          <dl class="first">
            <dt>Name</dt><dd>Vietnam_Provinces</dd>
            <dt>Path</dt><dd class="path lnk">C:\Users\dever\OneDrive\Desktop\QGIS _Stuff\Part1\Part1_Datasets\Vietnam_Provinces.dbf</dd>
            <dt>Source</dt><dd class="path">C:\Users\dever\OneDrive\Desktop\QGIS _Stuff\Part1\Part1_Datasets\Vietnam_Provinces.dbf|</dd>
            <dt></dt><dd>layername=Vietnam_Provinces</dd>
            <dt>Storage</dt><dd>ESRI Shapefile</dd>
            <dt>Comment</dt><dd></dd>
            <dt>Encoding</dt><dd>UTF-8</dd>
            <dt>Geometry</dt><dd>Polygon (MultiPolygon)</dd>
            <dt>CRS</dt><dd>EPSG:4326 - WGS 84 - Geographic</dd>
            <dt>Extent</dt><dd class="ext">102.1449966430664631,8.5633316040039063 : 109.4694290161135655,23.3927307128907187</dd>
            <dt>Unit</dt><dd>degrees</dd>
            <dt>Feature count</dt><dd>63</dd>
          </dl>
          <h2 class="next">Identification</h2>
          <dl><dt>Identifier</dt><dd></dd><dt>Parent Identifier</dt><dd></dd><dt>Title</dt><dd></dd><dt>Type</dt><dd class="ds">dataset</dd><dt>Language</dt><dd></dd><dt>Abstract</dt><dd></dd><dt>Categories</dt><dd></dd><dt>Keywords</dt><dd></dd></dl>
          <h2 class="next">Extent</h2>
          <dl><dt>CRS</dt><dd></dd><dt>Spatial Extent</dt><dd></dd><dt>Temporal Extent</dt><dd></dd></dl>
          <h2 class="next last">Access</h2>
        </div>
        <div class="scroll doc-s"><s class="up"></s><span class="low"></span><s class="dn"></s></div>
      </div>
      <div class="buttons"><span class="sty">Style<b></b></span><button>OK</button><button>Cancel</button><button>Apply</button><button>Help</button></div>
    </div>
  </div>
</section>
<svg class="marks" width="760" height="430" viewBox="0 0 760 430">
  <g fill="none" stroke="#ee1c24" stroke-width="1.500"><path d="M171 87.500h49v13.500h-49zM169 103h50v14h-50zM169 118.500h50v12.500h-50zM169 132.500h50v14.500h-50z"/></g>
  <path d="M398 244L233 142" stroke="#d23b50" stroke-width="1.200"/><path d="M226.500 137.500l9.300 1-5 7.800z" fill="#e8181f"/>
  <path d="M100.500 317.500L154 304" stroke="#dc3a3a" fill="none" stroke-width="1"/><path d="M161 302l-9.500-2.200 2 8.400z" fill="#f5181c"/>
</svg>
<div class="callout">Properties tabs</div>
</body>
</html>
```
FILE: styles.css
```css
* { box-sizing: border-box; }
body { margin: 0; width: 760px; height: 430px; overflow: hidden; position: relative; background: #ebebeb; font-family: "Open Sans", "Noto Sans", sans-serif; font-size: 5.5px; line-height: 1; color: #333; }
svg { display: block; flex: none; }
ul { list-style: none; margin: 0; padding: 0; }
i, em { font-style: normal; }
.defs { position: absolute; }
.i8 { width: 8px; height: 8px; }
.window { margin: 2px 1px 0 3px; width: 756px; height: 424px; border: 1px solid #5a5d60; display: flex; flex-direction: column; background: #e9e9e9; outline: .5px solid #85888a; }

.titlebar { height: 11px; flex: none; display: flex; align-items: center; background: #efefef; padding-left: 1px; color: #999; }
.apptitle { margin-left: 2px; font-size: 5.500px; }
.winbtns { margin-left: auto; margin-right: 9px; }
.menubar { height: 10px; flex: none; display: grid; grid-template-columns: 24px 16px 18px 20px 27px 24px 23px 22px 30px 18px 19px 34px 20px; padding: 1px 0 0 4px; align-items: center; color: #a3a3a3; font-size: 5.800px; background: #e4e4e4; }
.toolbar { height: 16px; flex: none; display: flex; align-items: center; padding-left: 6px; background: #e6e6e6; border-bottom: 1px solid #d2d2d2; }
.toolbar.second { height: 14px; border-bottom: 0; }
.toolbar i { width: 12.920px; height: 12px; flex: none; display: grid; place-items: center; }
.toolbar i svg { width: 9.500px; height: 9.500px; }
.toolbar .pressed { background: #d6d6d6; outline: .5px solid #aaa; }
.g7 { margin-left: 6.800px; } .g3 { margin-left: 3px; } .g10 { margin-left: 10.500px; }
.toolbar b { width: 6px; flex: none; }
b::before { content: ""; display: block; width: 0; margin-left: 1px; border: 1.600px solid transparent; border-top: 2px solid #444; border-bottom: 0; }

.work { flex: 1; min-height: 0; display: flex; }
.docks { width: 118px; flex: none; display: flex; flex-direction: column; background: #e8e8e8; }
.map { width: 635px; height: 340px; flex: 1; background: #ececec; overflow: hidden; margin-top: 1px; border-top: .5px solid #777; }
.dockhead { height: 9px; flex: none; display: flex; align-items: center; padding: 0 3px 0 1px; color: #444; gap: 1px; }
.dockhead span { margin-right: auto; }
.dockhead em { width: 4.500px; height: 4.500px; border: 1px solid #8a8a8a; background: #ccc; border-radius: 1px; }
.docktools { height: 12px; flex: none; display: flex; align-items: center; padding-left: 1px; }
.docktools i { width: 10px; display: grid; place-items: center; }
.docktools svg { width: 6.500px; height: 6.500px; }
.browser { height: 165px; flex: none; margin-left: 1px; display: flex; border: .5px solid #bbb; background: #eeeeee; overflow: hidden; }
.tree { flex: 1; font-size: 5.600px; padding-top: .2px; }
.tree li { height: 8.640px; display: flex; align-items: center; color: #3c3c3c; white-space: nowrap; }
.tree li svg { width: 8px; height: 8px; margin-right: 2.500px; }
.tree li u { width: 9.500px; }
u { flex: none; display: block; text-decoration: none; }
u.c::before { content: ""; display: block; margin-left: 2.500px; width: 0; border: 1.500px solid transparent; border-left: 2.200px solid #444; border-right: 0; }
u.o::before { content: ""; display: block; margin-left: 2px; width: 0; border: 1.700px solid transparent; border-top: 2.200px solid #444; border-bottom: 0; }
.tree .child span { display: flex; align-items: center; margin-left: 19px; width: 68px; height: 8px; background: #dedede; }
.pale { opacity: .5; }
.scroll { width: 6px; flex: none; display: flex; flex-direction: column; align-items: center; background: #ededed; border-left: .5px solid #ccc; }
.scroll .low { margin-top: auto; height: 9px; align-self: stretch; background: #dadada; }
.scroll s { height: 6px; display: grid; place-items: center; }
s::before { content: ""; width: 0; border: 1.500px solid transparent; }
s.up::before { border-bottom: 2px solid #444; border-top: 0; }
s.dn::before { border-top: 2px solid #444; border-bottom: 0; }
.lay { margin-top: 2px; }
.ltools { height: 11px; }
.ltools b { width: 6px; }
.ltools i { width: 9.800px; }
.grey { filter: grayscale(1); }
.layers { flex: 1; background: #eee; margin-left: 1px; border: .5px solid #c4c4c4; font-size: 5.700px; padding-top: 1px; }
.layers li { height: 8.640px; display: flex; align-items: center; font-weight: 700; color: #222; white-space: nowrap; letter-spacing: -.1px; }
.layers u { width: 10px; }
.layers q { width: 6px; height: 6px; border: .5px solid #ccc; background: #f2f2f2; margin-right: 2.500px; }
q::before, q::after { content: none; }
.layers q.k { border-color: transparent; background: none; }
q.k, .layers q.k { font: bold 6px/3px "DejaVu Sans", sans-serif; color: #222; }
.layers .off { font-weight: 400; font-style: italic; color: #808080; letter-spacing: .1px; }
.layers .sel { background: #dedede; }
.sw { width: 8px; height: 7.500px; margin-right: 2.500px; display: grid; place-items: center; }
.sw svg { width: 8px; height: 8px; }
.tan { background: #b9b49a; } .cyan { background: #19b9e8; } .red { background: #f22818; } .brown { background: #a2695a; } .olive { background: #8f9f5e; } .pink { background: #d795ab; } .green { background: #6c8c74; }
.dam { width: 6px; height: 6px; margin-left: 1px; margin-right: 3.500px; border-radius: 50%; background: #e3ea22; border: 1px solid #4e7a25; }
.line { height: 1px; background: #999; }

.land { fill: #6c9870; stroke: #3c553e; stroke-width: .7; }
.map .nb { stroke: none; }
.dkl { fill: #555c58; }
.sea { fill: #ececec; }
.vn { fill: #d7a93e; stroke: #4f4425; }
.urb { fill: #f5200f; stroke: #6a2418; }
.dark { fill: #37343a; }
.lake { fill: #1ba7e4; }
.bd { fill: none; stroke: #334c36; stroke-width: .7; stroke-linejoin: round; }
g .land, g .vn, g .urb, g .bd { stroke-width: 2; }
.dash { fill: none; stroke: #3d3d3d; stroke-width: 3; stroke-dasharray: 4 5; }
.dams circle { fill: #e1ec11; stroke: #6c9a1d; stroke-width: 2.500; }

.status { height: 14px; flex: none; display: flex; align-items: center; padding: 0 3px 0 1px; background: #e2e2e2; border-top: .5px solid #c8c8c8; font-size: 5px; color: #555; }
.locator { width: 91px; height: 10px; border: .5px solid #bbb; background: #efefef; display: flex; align-items: center; color: #999; margin-right: 302px; }
.locator svg { width: 7px; height: 7px; margin: 0 3px 0 4px; }
.fld { height: 9px; background: #efefef; border: .5px solid #c2c2c2; display: flex; align-items: center; padding-left: 2px; margin-left: 2px; font-size: 4.800px; }
.co { width: 44px; } .sc { width: 36px; } .mg { width: 36px; } .ro { width: 33px; }
.fld b { margin-left: auto; margin-right: 3px; }
.spin { margin: 0 2px 0 auto; width: 2px; height: 5px; border: 1px solid #666; border-width: 1.500px 0; }
.crs { margin: 0 6px 0 4px; width: 7px; height: 7px; }
.lock { width: 5px; height: 5px; background: #777; margin: 0 3px 0 6px; border-radius: 1px; }
.fld + label { margin-left: 4px; }
.status q.k { margin: 0 1px 0 3px; }
.epsg { width: 6px; height: 6px; margin: 0 1px 0 6px; }
.msg { width: 7px; height: 6px; border-radius: 50%; background: #666; margin-left: auto; }
.taskbar { height: 17px; flex: none; display: flex; align-items: center; background: linear-gradient(90deg, #cddad5 0, #ccd9d5 30%, #d9d3c6 36%, #d8cbc9 50%, #d5caca 58%, #c6d2ce 68%, #c8d2ce 100%); }
.taskbar i { width: 24.400px; height: 17px; display: grid; place-items: center; flex: none; }
.taskbar i svg { width: 10px; height: 10px; }
.taskbar i .big { width: 11px; height: 11px; }
.taskbar i .dk { width: 8px; height: 8px; color: #222; }
.act { background: #e6ebe8; }
.run { background: #c2d2d0; }
.weather { margin-left: 325px; display: flex; align-items: center; font-size: 7.200px; color: #333; white-space: nowrap; width: 62px; gap: 3px; }
time { display: flex; flex-direction: column; align-items: center; gap: 2px; font-size: 5.800px; color: #333; margin-left: 3px; width: 32px; }
.notif { margin-left: 7px; }

.dialog { position: absolute; left: 170px; top: 57px; width: 403px; height: 311px; border: 1.800px solid #e0262c; background: #ebebeb; display: flex; flex-direction: column; overflow: hidden; box-shadow: 1px 2px 3px rgba(0,0,0,.35); }
.dialog header { height: 15.500px; flex: none; display: flex; align-items: center; background: #f0f0f0; border-bottom: .5px solid #ddd; padding: 1px 4px 0 2px; font-size: 5.500px; color: #333; }
.dialog header span { margin-left: 3px; }
.dialog .x { margin-left: auto; }
.dbody { flex: 1; display: flex; min-height: 0; }
.side { width: 58px; flex: none; display: flex; flex-direction: column; }
.find { height: 10.500px; flex: none; background: #f3f3f3; border: .5px solid #999; padding: 1.500px 2px; color: #888; }
.find svg { width: 7px; height: 7px; transform: scaleX(-1); }
.sidemid { flex: 1; display: flex; min-height: 0; }
.tabs { width: 52px; padding-top: 3px; background: #626262; overflow: hidden; color: #e2e2e2; font-size: 5.900px; }
.tabs li { height: 14.930px; display: flex; align-items: center; white-space: nowrap; line-height: 7.500px; }
.tabs li.two { height: 19px; }
.tabs li svg { width: 10px; height: 10px; margin: 0 3.500px 0 1px; }
.tabs .on { background: #eee; color: #555; margin-right: 2px; }
.dep { font-size: 5.600px; }
.side-s .low { height: 37px; }
.right { flex: 1; display: flex; flex-direction: column; border-left: 1px solid #ccc; min-width: 0; }
.content { flex: 1; min-height: 0; display: flex; }
.doc { flex: 1; overflow: hidden; padding-left: 1px; }
h2 { margin: 0; height: 16.500px; padding: 6px 0 0 5px; font-size: 7.300px; font-weight: 400; color: #82a05e; border-bottom: .8px solid #cfcfcf; }
.next { margin-top: 15px; height: 12.200px; padding-top: .5px; }
.last { height: 9px; border: 0; }
dl { margin: 0; padding: 4.300px 0 0 14px; display: grid; grid-template-columns: 40.500px 1fr; grid-auto-rows: 7.470px; align-items: center; font-size: 5px; color: #444; white-space: nowrap; }
.first { padding-top: 4.600px; }
dt { font-weight: 700; color: #222; letter-spacing: -.12px; }
dd { margin: 0; font-size: 4.800px; }
.path { letter-spacing: .035px; }
.ds { padding-left: 6px; }
.lnk { color: #7fa6cc; text-decoration: underline; text-decoration-thickness: .5px; }
.doc-s .low { height: 155px; }
.doc-s { background: #f0f0f0; width: 7px; }
.buttons { height: 10.500px; flex: none; display: flex; align-items: center; gap: 2px; padding: 0 1px 0 8px; border-top: .5px solid #ccc; font-size: 5px; }
.sty { display: flex; align-items: center; gap: 6px; margin-right: auto; }
button { width: 32px; height: 9px; padding: 0; border: .5px solid #a9bfca; background: #e4e6e7; font: 5px "Open Sans", sans-serif; color: #333; }
.marks { position: absolute; left: 0; top: 0; }
.callout { position: absolute; left: 401px; top: 247px; font: 700 10.600px/13px "Open Sans", sans-serif; color: #d92932; white-space: nowrap; }
```
